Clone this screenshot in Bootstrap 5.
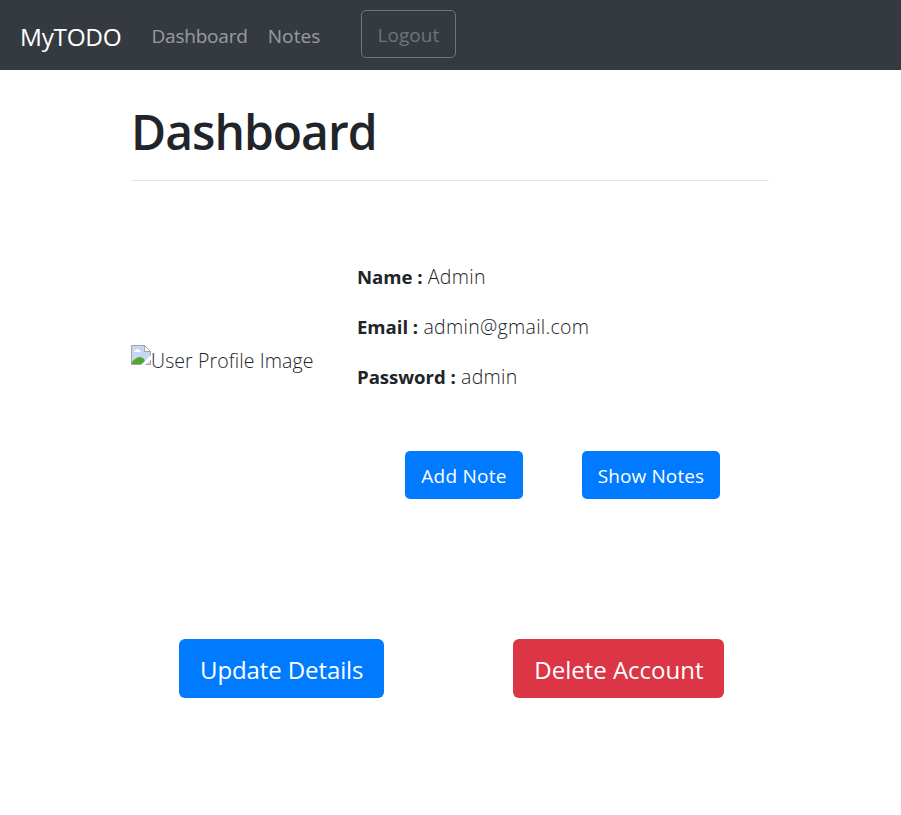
<!DOCTYPE html>
<html lang="en">
<head>
<meta charset="utf-8">
<meta name="viewport" content="width=device-width, initial-scale=1">
<title>MyTODO - Dashboard</title>
<link rel="stylesheet" href="https://cdn.jsdelivr.net/npm/bootstrap@5.3.0/dist/css/bootstrap.min.css">
<style>
  html { font-size: 20px; }
  body { font-family: "Segoe UI", "Open Sans", "Noto Sans", sans-serif; font-size: 19px; line-height: 30px; color: #212529; letter-spacing: -.2px; }
  .topbar { background: #343a40; height: 70px; padding: 0 20px; }
  .topbar .navbar-brand { font-size: 24.4px; margin-right: 20px; padding: 3px 0 0; letter-spacing: -.3px; }
  .topbar .nav-link { color: rgba(255,255,255,.5); padding: 1px 10px 0; }
  .topbar .nav-link + .nav-link { letter-spacing: .1px; }
  .btn { font-size: 19px; line-height: 32px; padding: 8px 15px; border-radius: 5px; height: 48px; letter-spacing: .25px; white-space: nowrap; }
  .btn-logout { color: #6c757d; border: 1px solid #6c757d; margin: 0 0 2px 30.5px; letter-spacing: .1px; width: 95px; }
  .page { width: 638px; margin-left: 131px; }
  .page-title { font-size: 48px; line-height: 60px; font-weight: 600; margin: 32px 0 18px; letter-spacing: -1px; }
  .rule { border-top: 1px solid rgba(0,0,0,.1); opacity: 1; margin: 0; }
  .profile { height: 358px; font-weight: 350; font-size: 19.5px; letter-spacing: .1px; }
  .photo { width: 226px; }
  .photo span { padding-top: 2px; }
  .details { padding-top: 81px; letter-spacing: .3px; }
  .details p { margin-bottom: 20px; }
  .details strong { font-weight: 700; font-size: 18.6px; letter-spacing: -.05px; }
  .btn-blue { background: #007bff; color: #fff; }
  .btn-red { background: #dc3545; color: #fff; }
  .note-actions { margin: 59px 0 0 48px; gap: 59px; }
  .note-actions .btn:first-child { width: 118px; }
  .note-actions .btn:last-child { width: 138px; padding: 8px 14px; letter-spacing: .1px; }
  .account-actions { margin: 100px 0 0 48px; gap: 129px; }
  .account-actions .btn { font-size: 24px; line-height: 41px; height: 59px; padding: 9px 20px; border-radius: 6px; letter-spacing: -.1px; }
  .account-actions .btn-red { width: 211px; padding: 9px 19px; letter-spacing: 0; }
</style>
</head>
<body>
<nav class="navbar topbar flex-nowrap justify-content-start">
  <a class="navbar-brand text-white" href="#">MyTODO</a>
  <div class="nav flex-nowrap"><a class="nav-link" href="#">Dashboard</a><a class="nav-link" href="#">Notes</a></div>
  <button class="btn btn-logout" type="button">Logout</button>
</nav>
<main class="page">
  <h1 class="page-title">Dashboard</h1>
  <hr class="rule">
  <section class="profile d-flex">
    <div class="photo d-flex align-items-center">
      <svg width="20" height="20" viewBox="0 0 20 20" class="align-self-center mb-2" aria-hidden="true">
        <path d="M.5.5h13l6 6v13H.5z" fill="#c6d7f4" stroke="#a5a5a5"/>
        <path d="M13.5.5v6h6z" fill="#fff" stroke="#a5a5a5"/>
        <path d="M3 7q0-2 2-2 1-2 3 0 2 0 2 2z" fill="#fff"/>
        <path d="M1 19v-2q7-8 12-3l2 5z" fill="#50a633"/>
        <path d="M20 10L10 20h4l7-6z" fill="#fff"/>
      </svg>
      <span>User Profile Image</span>
    </div>
    <div class="details">
      <p><strong>Name :</strong> Admin</p>
      <p><strong>Email :</strong> admin@gmail.com</p>
      <p class="mb-0"><strong>Password :</strong> admin</p>
      <div class="note-actions d-flex">
        <a class="btn btn-blue" href="#">Add Note</a>
        <a class="btn btn-blue" href="#">Show Notes</a>
      </div>
    </div>
  </section>
  <div class="account-actions d-flex">
    <a class="btn btn-blue" href="#">Update Details</a>
    <a class="btn btn-red" href="#">Delete Account</a>
  </div>
</main>
<script src="https://cdn.jsdelivr.net/npm/bootstrap@5.3.0/dist/js/bootstrap.bundle.min.js"></script>
</body>
</html>
